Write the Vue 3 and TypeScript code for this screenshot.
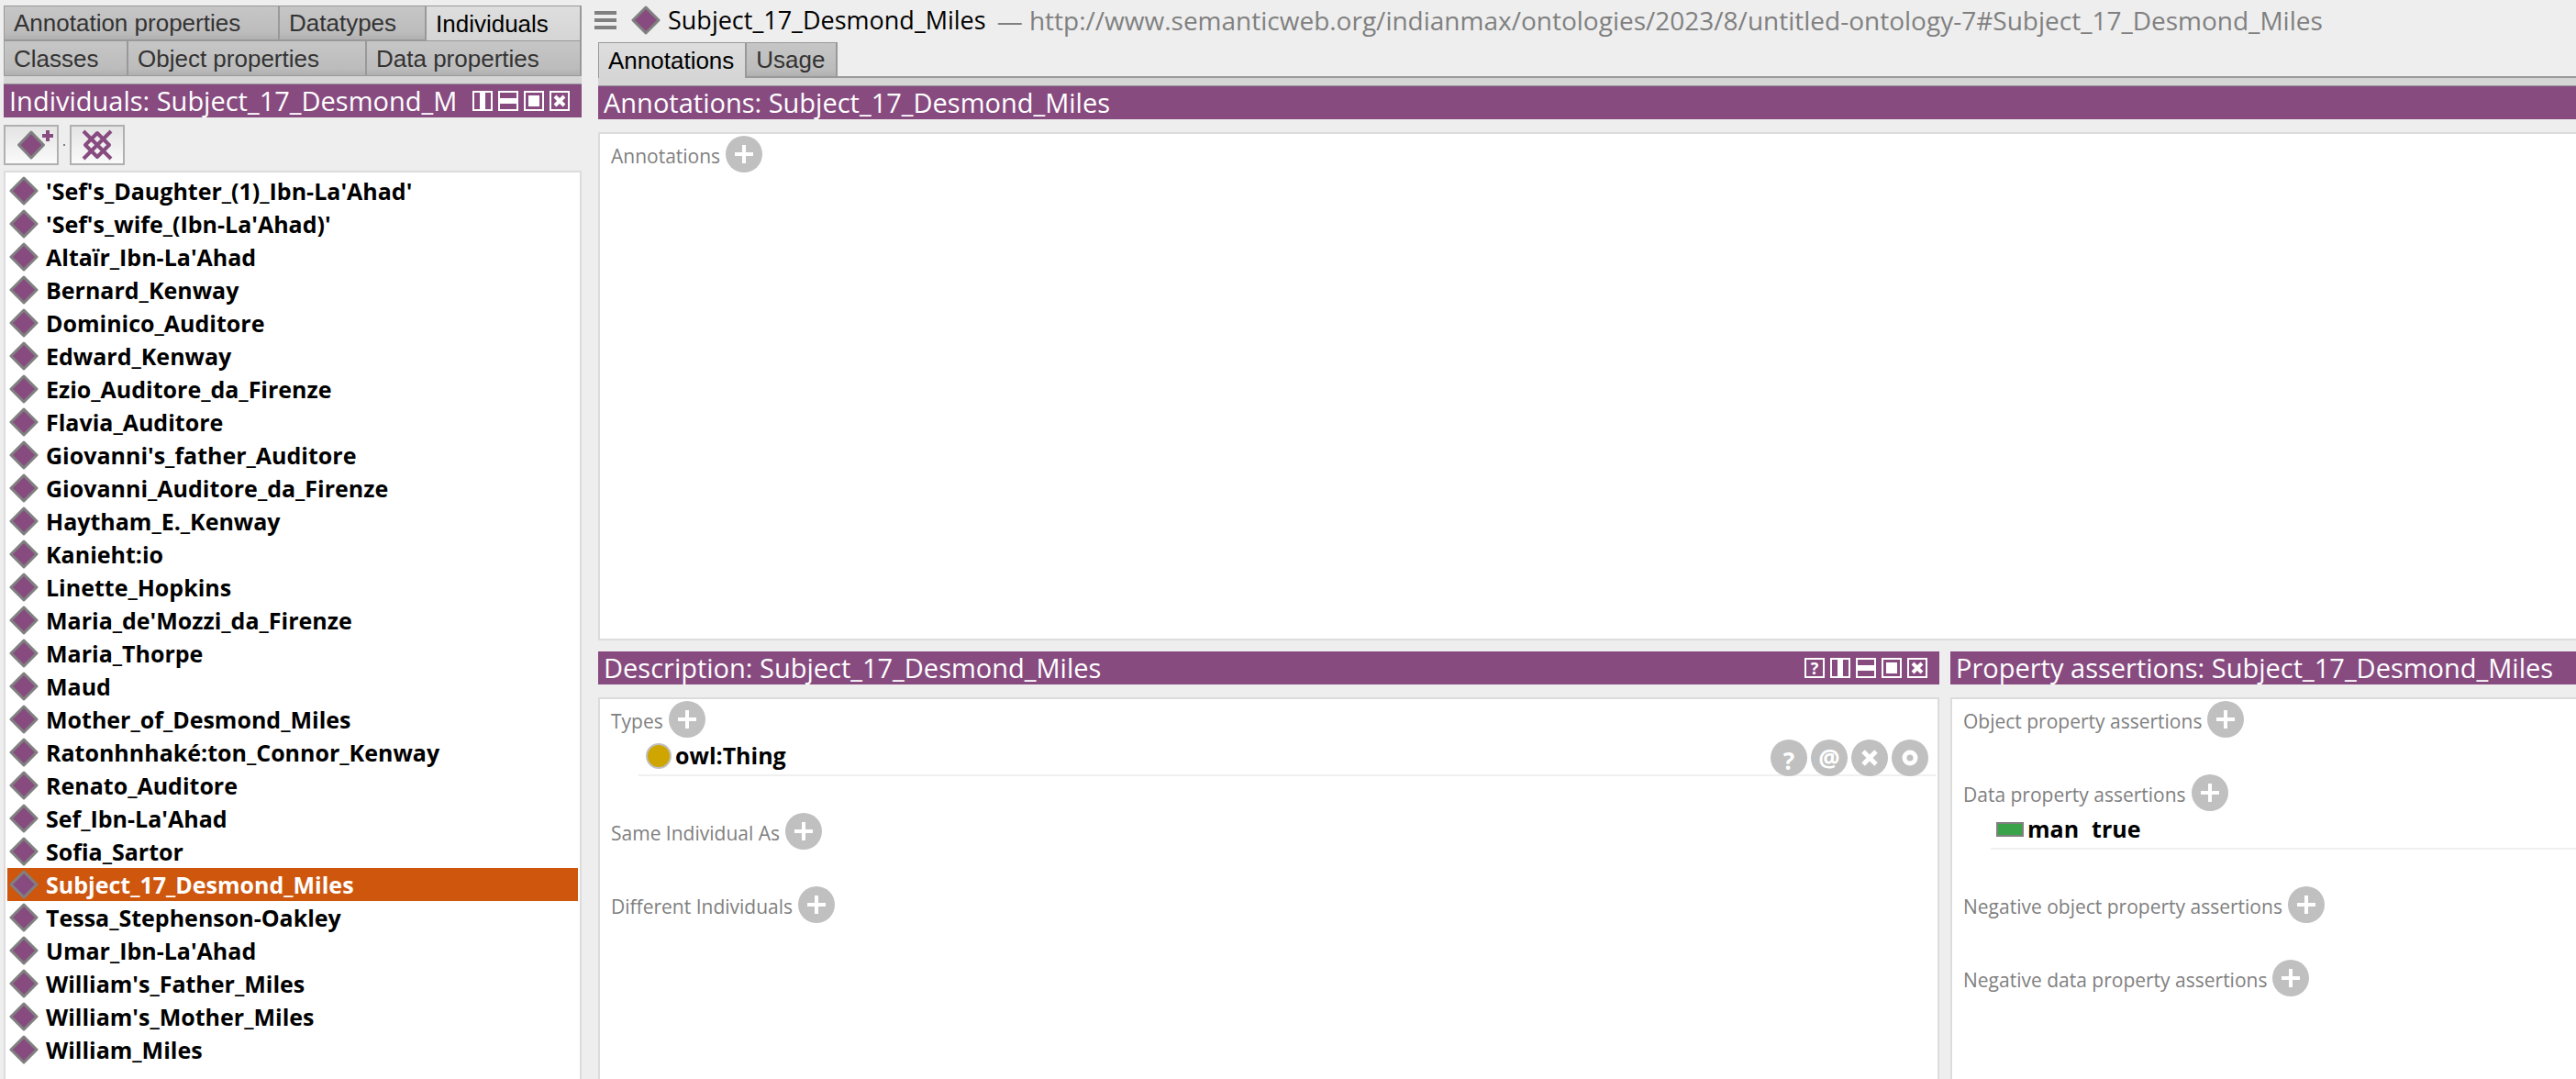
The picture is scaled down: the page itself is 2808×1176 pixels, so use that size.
<script setup lang="ts">
import { computed, ref } from 'vue'

interface Section {
  label: string
  item?: { kind: 'class' | 'data'; name: string; value?: string }
}

const tabRows = [
  { cls: 'row-a', tabs: ['Annotation properties', 'Datatypes', 'Individuals'] },
  { cls: 'row-b', tabs: ['Classes', 'Object properties', 'Data properties'] },
]
const activeTab = ref('Individuals')

const viewTabs = ['Annotations', 'Usage']
const activeView = ref('Annotations')

const individuals = [
  "'Sef's_Daughter_(1)_Ibn-La'Ahad'",
  "'Sef's_wife_(Ibn-La'Ahad)'",
  "Altaïr_Ibn-La'Ahad",
  'Bernard_Kenway',
  'Dominico_Auditore',
  'Edward_Kenway',
  'Ezio_Auditore_da_Firenze',
  'Flavia_Auditore',
  "Giovanni's_father_Auditore",
  'Giovanni_Auditore_da_Firenze',
  'Haytham_E._Kenway',
  'Kanieht:io',
  'Linette_Hopkins',
  "Maria_de'Mozzi_da_Firenze",
  'Maria_Thorpe',
  'Maud',
  'Mother_of_Desmond_Miles',
  'Ratonhnhaké:ton_Connor_Kenway',
  'Renato_Auditore',
  "Sef_Ibn-La'Ahad",
  'Sofia_Sartor',
  'Subject_17_Desmond_Miles',
  'Tessa_Stephenson-Oakley',
  "Umar_Ibn-La'Ahad",
  "William's_Father_Miles",
  "William's_Mother_Miles",
  'William_Miles',
]
const selected = ref('Subject_17_Desmond_Miles')
const baseIri = 'http://www.semanticweb.org/indianmax/ontologies/2023/8/untitled-ontology-7#'

// The narrow side panel only has room for the first characters of its title.
const sideTitle = computed(() => `Individuals: ${selected.value}`.slice(0, 33))

const description: Section[] = [
  { label: 'Types', item: { kind: 'class', name: 'owl:Thing' } },
  { label: 'Same Individual As' },
  { label: 'Different Individuals' },
]
const assertions: Section[] = [
  { label: 'Object property assertions' },
  { label: 'Data property assertions', item: { kind: 'data', name: 'man', value: 'true' } },
  { label: 'Negative object property assertions' },
  { label: 'Negative data property assertions' },
]

const windowIcons: Record<string, string> = {
  'Split vertically': 'M11 2V20',
  'Split horizontally': 'M2 11H20',
  Float: 'M5 11H17',
  Close: 'M6 6L16 16M16 6L6 16',
}
const windowStroke: Record<string, number> = {
  'Split vertically': 6,
  'Split horizontally': 6,
  Float: 12,
  Close: 4,
}
</script>

<template>
  <div class="app">
    <aside class="sidebar">
      <nav class="tab-rows">
        <div v-for="row in tabRows" :key="row.cls" class="tab-row" :class="row.cls">
          <button
            v-for="tab in row.tabs"
            :key="tab"
            type="button"
            class="tab"
            :class="{ active: tab === activeTab }"
            @click="activeTab = tab"
          >{{ tab }}</button>
        </div>
      </nav>
      <div class="strip"></div>
      <header class="title-bar">
        <h2>{{ sideTitle }}</h2>
        <div class="window-buttons">
          <button v-for="(d, name) in windowIcons" :key="name" type="button" :aria-label="String(name)">
            <svg viewBox="0 0 22 22"><rect x="1" y="1" width="20" height="20" /><path :d="d" :stroke-width="windowStroke[name]" /></svg>
          </button>
        </div>
      </header>
      <div class="toolbar">
        <button type="button" class="tool" aria-label="Add individual">
          <svg viewBox="0 0 56 40">
            <path class="gem" d="M28 6L41.500 20L28 34L14.500 20Z" />
            <path class="purple-line" d="M46 4V16M40 10H52" stroke-width="4" />
          </svg>
        </button>
        <span class="dot"></span>
        <button type="button" class="tool" aria-label="Delete individual">
          <svg viewBox="0 0 56 40">
            <path class="purple-line round" d="M28 7L41 20L28 33L15 20Z" stroke-width="4" />
            <path class="purple-line" d="M13 5L43 35M43 5L13 35" stroke-width="4" />
          </svg>
        </button>
      </div>
      <ul class="individuals">
        <li v-for="name in individuals" :key="name">
          <button type="button" :class="{ selected: name === selected }" @click="selected = name">
            <svg class="diamond" viewBox="0 0 32 32"><path class="gem" d="M16 2L30 16L16 30L2 16Z" /></svg>
            <span>{{ name }}</span>
          </button>
        </li>
      </ul>
    </aside>

    <main class="main">
      <header class="entity">
        <button type="button" class="menu" aria-label="Menu"><i></i><i></i><i></i></button>
        <svg class="diamond" viewBox="0 0 32 32"><path class="gem" d="M16 2L30 16L16 30L2 16Z" /></svg>
        <h1>{{ selected }}</h1>
        <p>— {{ baseIri }}{{ selected }}</p>
      </header>
      <nav class="view-tabs">
        <button
          v-for="tab in viewTabs"
          :key="tab"
          type="button"
          class="tab"
          :class="{ active: tab === activeView }"
          @click="activeView = tab"
        >{{ tab }}</button>
      </nav>
      <div class="strip"></div>

      <section class="panel annotations">
        <header class="title-bar"><h2>Annotations: {{ selected }}</h2></header>
        <div class="box closed">
          <div class="section">
            <div class="section-head">
              <h3>Annotations</h3>
              <button type="button" class="round-button" aria-label="Add annotation">
                <svg viewBox="0 0 40 40"><path d="M20 10V30M10 20H30" /></svg>
              </button>
            </div>
          </div>
        </div>
      </section>

      <div class="lower">
        <section class="panel">
          <header class="title-bar">
            <h2>Description: {{ selected }}</h2>
            <div class="window-buttons">
              <button type="button" class="help" aria-label="Help">?</button>
              <button v-for="(d, name) in windowIcons" :key="name" type="button" :aria-label="String(name)">
                <svg viewBox="0 0 22 22"><rect x="1" y="1" width="20" height="20" /><path :d="d" :stroke-width="windowStroke[name]" /></svg>
              </button>
            </div>
          </header>
          <div class="box">
            <div v-for="s in description" :key="s.label" class="section">
              <div class="section-head">
                <h3>{{ s.label }}</h3>
                <button type="button" class="round-button" :aria-label="'Add to ' + s.label">
                  <svg viewBox="0 0 40 40"><path d="M20 10V30M10 20H30" /></svg>
                </button>
              </div>
              <div v-if="s.item" class="item">
                <span class="class-icon"></span>
                <span class="name">{{ s.item.name }}</span>
                <div class="item-actions">
                  <button type="button" class="round-button low">?</button>
                  <button type="button" class="round-button">@</button>
                  <button type="button" class="round-button" aria-label="Remove">
                    <svg viewBox="0 0 40 40"><path d="M13 13L27 27M27 13L13 27" stroke-width="5" /></svg>
                  </button>
                  <button type="button" class="round-button" aria-label="Edit">
                    <svg viewBox="0 0 40 40"><circle cx="20" cy="20" r="6" stroke-width="5" /></svg>
                  </button>
                </div>
              </div>
            </div>
          </div>
        </section>

        <section class="panel">
          <header class="title-bar"><h2>Property assertions: {{ selected }}</h2></header>
          <div class="box open-right">
            <div v-for="s in assertions" :key="s.label" class="section">
              <div class="section-head">
                <h3>{{ s.label }}</h3>
                <button type="button" class="round-button" :aria-label="'Add to ' + s.label">
                  <svg viewBox="0 0 40 40"><path d="M20 10V30M10 20H30" /></svg>
                </button>
              </div>
              <div v-if="s.item" class="item">
                <span class="data-icon"></span>
                <span class="name">{{ s.item.name }}</span>
                <span class="name value">{{ s.item.value }}</span>
              </div>
            </div>
          </div>
        </section>
      </div>
    </main>
  </div>
</template>

<style>
body {
  background: #eee;
}
</style>

<style scoped>
.app {
  display: grid;
  grid-template-columns: minmax(0, 630fr) minmax(0, 2156fr);
  column-gap: 18px;
  height: 100vh;
  padding-left: 4px;
  box-sizing: border-box;
  overflow: hidden;
  background: #eee;
  color: #000;
  font-family: 'Open Sans', 'Noto Sans', sans-serif;
}

button {
  margin: 0;
  padding: 0;
  border: 0;
  background: none;
  color: inherit;
  font: inherit;
  box-sizing: border-box;
}

h1,
h2,
h3,
p,
ul {
  margin: 0;
  padding: 0;
  font-weight: 400;
  white-space: nowrap;
}

svg {
  display: block;
  flex: none;
}

.gem {
  fill: #874b80;
  stroke: #808080;
  stroke-width: 3;
  stroke-linejoin: round;
}

.purple-line {
  fill: none;
  stroke: #874b80;
}

.round {
  stroke-linejoin: round;
}

.sidebar,
.main,
.panel {
  display: flex;
  flex-direction: column;
  min-width: 0;
  min-height: 0;
}

/* Tabs */
.tab-rows {
  margin-top: 6px;
  border: 1px solid #999;
  border-right-width: 2px;
}

.tab-row {
  display: grid;
  height: 38px;
}

.row-a {
  grid-template-columns: 300fr 160fr 167fr;
}

.row-b {
  grid-template-columns: 135fr 260fr 232fr;
  height: 37px;
}

.tab {
  padding: 0 0 0 10px;
  border-right: 2px solid #999;
  background: linear-gradient(#c6c6c6, #bcbcbc 80%, #b0b0b0);
  color: #333;
  font: 26px/36px 'Liberation Sans', Arial, sans-serif;
  text-align: left;
  white-space: nowrap;
}

.tab-row .tab:last-child {
  border-right: 0;
}

.row-a .tab {
  border-bottom: 2px solid #999;
}

.tab.active {
  background: linear-gradient(#dedede, #d5d5d5);
  color: #000;
}

.row-a .tab.active {
  border-bottom-width: 1px;
}

.strip {
  flex: none;
  height: 8px;
  background: #d5d5d5;
  border-bottom: 1px solid #999;
}

.view-tabs {
  display: flex;
  height: 39px;
  background: linear-gradient(#999, #999) bottom / 100% 2px no-repeat;
}

.view-tabs .tab {
  padding-right: 12px;
  border-top: 1px solid #999;
}

.view-tabs .tab:not(.active) {
  border-bottom: 2px solid #999;
}

.view-tabs .tab.active {
  border-left: 1px solid #999;
}

/* Panel chrome */
.title-bar {
  display: flex;
  flex: none;
  align-items: center;
  justify-content: space-between;
  height: 36px;
  padding: 0 13px 0 6px;
  background: #874b80;
  color: #fff;
}

.title-bar h2 {
  font-size: 29px;
  line-height: 36px;
}

.window-buttons {
  display: flex;
  flex: none;
  gap: 6px;
}

.window-buttons button {
  width: 22px;
  height: 22px;
}

.window-buttons svg {
  width: 22px;
  height: 22px;
  fill: none;
  stroke: #fff;
  stroke-width: 2;
}

.window-buttons .help {
  border: 2px solid #fff;
  font-size: 18px;
  font-weight: 700;
  line-height: 18px;
}

.box {
  flex: 1;
  min-height: 0;
  margin-top: 14px;
  padding-top: 2px;
  border: 2px solid #dcdcdc;
  border-bottom: 0;
  background: #fff;
}

.open-right {
  border-right: 0;
}

.closed {
  border-right: 0;
  border-bottom: 2px solid #dcdcdc;
}

/* Sidebar */
.toolbar {
  display: flex;
  align-items: center;
  gap: 5px;
  padding: 8px 0 6px;
}

.tool {
  width: 60px;
  height: 44px;
  border: 2px solid #b0b0b0;
  background: linear-gradient(#e4e4e4, #fafafa);
}

.tool svg {
  width: 56px;
  height: 40px;
}

.dot {
  width: 2px;
  height: 2px;
  background: #808080;
}

.individuals {
  flex: 1;
  min-height: 0;
  padding: 2px;
  border: 2px solid #dcdcdc;
  border-bottom: 0;
  background: #fff;
  list-style: none;
}

.individuals button {
  display: flex;
  align-items: center;
  gap: 8px;
  width: 100%;
  height: 36px;
  padding-left: 2px;
  font-size: 25px;
  font-weight: 700;
  line-height: 36px;
  text-align: left;
}

.individuals .selected {
  background: #ce560d;
  color: #fff;
}

.diamond {
  width: 32px;
  height: 32px;
}

/* Entity header */
.entity {
  display: flex;
  flex: none;
  align-items: center;
  height: 44px;
  padding-bottom: 2px;
  margin-left: -4px;
  line-height: 44px;
}

.menu {
  display: flex;
  flex-direction: column;
  gap: 4px;
  width: 24px;
  margin-right: 16px;
}

.menu i {
  height: 4px;
  background: #808080;
}

.entity h1 {
  margin: 0 12px 0 8px;
  font-size: 27px;
}

.entity p {
  color: #808080;
  font-size: 28px;
}

/* Sections */
.annotations {
  flex: 604 1 0;
}

.lower {
  display: grid;
  flex: 466 1 0;
  grid-template-columns: minmax(0, 1462fr) minmax(0, 682fr);
  column-gap: 12px;
  min-height: 0;
  margin-top: 12px;
}

.section {
  margin-bottom: 40px;
}

.section-head {
  display: flex;
  align-items: center;
  gap: 6px;
  height: 40px;
  padding-left: 12px;
}

.section-head h3 {
  padding-top: 4px;
  color: #808080;
  font-size: 21px;
  line-height: 36px;
}

.round-button {
  width: 40px;
  height: 40px;
  border-radius: 50%;
  background: #c0c0c0;
  color: #fff;
  font-size: 26px;
  font-weight: 700;
  line-height: 38px;
  text-align: center;
}

.low {
  padding-top: 4px;
}

.round-button svg {
  width: 40px;
  height: 40px;
  fill: none;
  stroke: #fff;
  stroke-width: 4;
}

.item {
  display: flex;
  align-items: center;
  height: 40px;
  margin: 0 2px 0 42px;
  border-bottom: 2px solid #f0f0f0;
  font-size: 25px;
  font-weight: 700;
  line-height: 36px;
}

.name {
  padding-bottom: 2px;
}

.open-right .item {
  margin-right: 0;
}

.class-icon {
  width: 28px;
  height: 28px;
  margin: 0 4px 0 8px;
  border: 2px solid #c0c0c0;
  border-radius: 50%;
  background: #cfa500;
  box-sizing: border-box;
}

.data-icon {
  width: 30px;
  height: 16px;
  margin: 0 4px 0 6px;
  border: 2px solid #808080;
  background: #3aa349;
  box-sizing: border-box;
}

.value {
  margin-left: 14px;
}

.item-actions {
  display: flex;
  gap: 4px;
  height: 36px;
  margin: 0 8px 0 auto;
}
</style>
